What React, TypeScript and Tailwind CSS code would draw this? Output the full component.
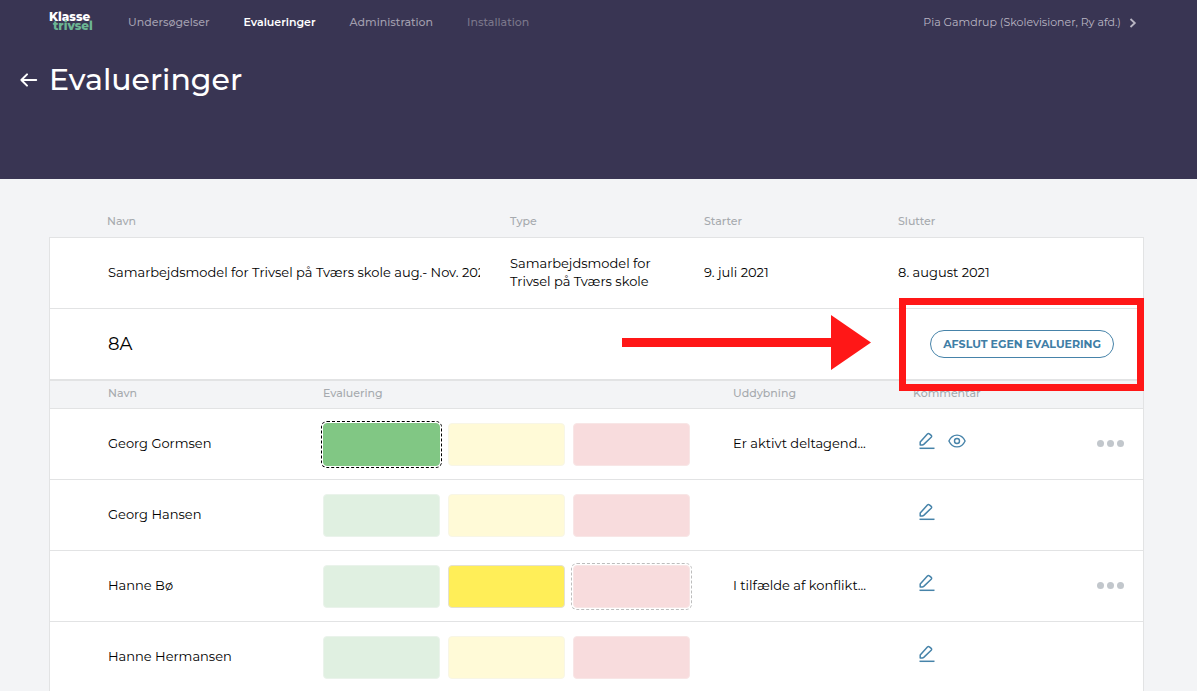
import { clsx } from 'clsx';

type Rating = 'green' | 'yellow' | 'red';

interface Student {
    name: string;
    selected?: Rating;
    outlined?: Rating;
    note?: string;
    canView?: boolean;
    hasMenu?: boolean;
}

const NAV_ITEMS = [
    { label: 'Undersøgelser', className: 'text-[#a19eae] font-medium' },
    { label: 'Evalueringer', className: 'text-white font-semibold' },
    { label: 'Administration', className: 'text-[#a19eae] font-medium' },
    { label: 'Installation', className: 'text-[#7b778b] font-medium' },
];

const STUDENTS: Student[] = [
    { name: 'Georg Gormsen', selected: 'green', outlined: 'green', note: 'Er aktivt deltagend...', canView: true, hasMenu: true },
    { name: 'Georg Hansen' },
    { name: 'Hanne Bø', selected: 'yellow', outlined: 'red', note: 'I tilfælde af konflikt...', hasMenu: true },
    { name: 'Hanne Hermansen' },
];

const RATINGS: { id: Rating; label: string; pale: string; solid: string }[] = [
    { id: 'green', label: 'Grøn', pale: 'bg-[#e0f0e1] border-[#eaf3eb]', solid: 'bg-[#81c784] border-[#81c784]' },
    { id: 'yellow', label: 'Gul', pale: 'bg-[#fffad7] border-[#f8f6e6]', solid: 'bg-[#ffee58] border-[#e4e1d0]' },
    { id: 'red', label: 'Rød', pale: 'bg-[#f8dcdd] border-[#f8e6e6]', solid: 'bg-[#e57373] border-[#e57373]' },
];

const PencilIcon = () => (
    <svg width="18" height="18" viewBox="0 0 18 18" fill="none" stroke="#4683a9" strokeWidth="1.5" strokeLinejoin="round">
        <path d="M2.2 12.9V10L9.4 2.1Q10.4 1 11.4 1.9L13.2 3.4Q14.1 4.2 13.2 5.2L6 12.1Q5.1 12.9 4.2 12.9Z" />
        <path d="M1.5 16.3H16.5" />
    </svg>
);

const EyeIcon = () => (
    <svg width="18" height="14" viewBox="0 0 18 14" fill="none" stroke="#4683a9" strokeWidth="1.4" strokeLinejoin="round">
        <path d="M.9 7C2.7 3.2 5.6 1.1 9 1.1S15.3 3.2 17.1 7C15.3 10.8 12.4 12.9 9 12.9S2.7 10.8 .9 7Z" />
        <circle cx="9" cy="7" r="2.5" />
    </svg>
);

const RatingButtons = ({ student }: { student: Student }) => (
    <div className="flex gap-2">
        {RATINGS.map((rating) => (
            <button
                key={rating.id}
                aria-label={rating.label}
                aria-pressed={student.selected === rating.id}
                className={clsx(
                    'w-[117px] h-[43px] rounded border',
                    student.selected === rating.id ? rating.solid : rating.pale,
                    student.outlined === rating.id && 'outline-1 outline-dashed outline-offset-1',
                    student.outlined === rating.id && (student.selected === rating.id ? 'outline-black' : 'outline-[#bdbdbd]')
                )}
            />
        ))}
    </div>
);

const Header = () => (
    <header className="bg-[#393553] h-[179px] pl-5 pr-[60px]">
        <div className="flex items-center h-11 pl-[29px]">
            <a href="#" className="w-[79px] pb-[3px] text-[12px] leading-[9px] font-extrabold text-white">
                <span className="block">Klasse</span>
                <span className="block pl-1 text-[#6cb593]">trivsel</span>
            </a>
            <nav className="flex gap-[34px] text-[11px]">
                {NAV_ITEMS.map((item) => (
                    <a key={item.label} href="#" className={item.className}>{item.label}</a>
                ))}
            </nav>
            <button className="ml-auto flex items-center gap-2 text-[11px] text-[#b9b6c3]">
                Pia Gamdrup (Skolevisioner, Ry afd.)
                <svg className="mt-0.5" width="8" height="10" viewBox="0 0 8 10" fill="none" stroke="currentColor" strokeWidth="1.8">
                    <path d="M1.5 1L5.8 5L1.5 9" />
                </svg>
            </button>
        </div>
        <div className="flex items-center gap-[11px] mt-4">
            <a href="#" aria-label="Tilbage">
                <svg width="18" height="14" viewBox="0 0 18 14" fill="none" stroke="#fff" strokeWidth="2" strokeLinecap="round" strokeLinejoin="round">
                    <path d="M7 1.4L1.4 7L7 12.6M1.4 7H16.2" />
                </svg>
            </a>
            <h1 className="text-[30px] leading-10 font-medium text-white">Evalueringer</h1>
        </div>
    </header>
);

const EvaluationTable = () => (
    <table className="w-full table-fixed border-separate border-spacing-0 text-left">
        <thead className="text-[11px] text-[#a6aaae]">
            <tr className="h-[58px]">
                <th className="pl-[58px] pt-[26px] font-medium">Navn</th>
                <th className="w-[194px] pt-[26px] font-medium">Type</th>
                <th className="w-[194px] pt-[26px] font-medium">Starter</th>
                <th className="w-[246px] pt-[26px] font-medium">Slutter</th>
            </tr>
        </thead>
        <tbody className="bg-white text-[13px] leading-[18px]">
            <tr className="h-[71px]">
                <td className="border-t border-l border-[#e2e3e4] pl-[58px] pr-[30px] pb-0.5">
                    <div className="overflow-hidden whitespace-nowrap">Samarbejdsmodel for Trivsel på Tværs skole aug.- Nov. 2021</div>
                </td>
                <td className="border-t border-[#e2e3e4] pr-10 pb-0.5">Samarbejdsmodel for Trivsel på Tværs skole</td>
                <td className="border-t border-[#e2e3e4] pb-0.5">9. juli 2021</td>
                <td className="border-t border-r border-[#e2e3e4] pb-0.5">8. august 2021</td>
            </tr>
        </tbody>
    </table>
);

const ClassRow = () => (
    <div className="relative flex items-center justify-between h-[71px] bg-white border-x border-t border-[#e2e3e4] pl-[58px] pr-[29px]">
        <h2 className="text-[18px]">8A</h2>
        <button className="h-7 px-3 rounded-full border border-[#4683a9] text-[11px] font-bold text-[#3f7ea6]">AFSLUT EGEN EVALUERING</button>

        {/* Guide highlight */}
        <svg className="absolute right-[272px] top-1.5 pointer-events-none" width="249" height="55" viewBox="0 0 249 55" fill="#ff1717">
            <path d="M0 23H209V0L249 27.5L209 55V32H0Z" />
        </svg>
        <div className="absolute -right-px -top-[11px] z-10 w-[245px] h-[93px] border-[7px] border-[#ff1717] pointer-events-none" />
    </div>
);

const StudentTable = () => (
    <div className="bg-white border-x border-t-2 border-[#e2e3e4]">
        <table className="w-full table-fixed border-separate border-spacing-0 text-left">
            <thead className="bg-[#f3f4f6] text-[11px] leading-[18px] text-[#a6aaae]">
                <tr className="h-[27px]">
                    <th className="w-[273px] pl-[58px] pb-1 font-medium">Navn</th>
                    <th className="w-[410px] pb-1 font-medium">Evaluering</th>
                    <th className="w-[180px] pb-1 font-medium">Uddybning</th>
                    <th className="pb-1 font-medium">Kommentar</th>
                    <th className="w-[100px]" aria-label="Handlinger"></th>
                </tr>
            </thead>
            <tbody className="text-[13px]">
                {STUDENTS.map((student) => (
                    <tr key={student.name} className="h-[71px]">
                        <td className="border-t border-[#e2e3e4] pl-[58px]">{student.name}</td>
                        <td className="border-t border-[#e2e3e4]"><RatingButtons student={student} /></td>
                        <td className="border-t border-[#e2e3e4] whitespace-nowrap">{student.note}</td>
                        <td className="border-t border-[#e2e3e4] pl-[5px] pb-1.5">
                            <div className="flex items-center gap-3">
                                <button aria-label="Rediger kommentar"><PencilIcon /></button>
                                {student.canView && <button aria-label="Vis kommentar"><EyeIcon /></button>}
                            </div>
                        </td>
                        <td className="border-t border-[#e2e3e4] pr-[19px] pb-0.5">
                            {student.hasMenu && (
                                <button aria-label="Flere valg" className="flex gap-[3px] ml-auto">
                                    <span className="size-[7px] rounded-full bg-[#c2c7cc]" />
                                    <span className="size-[7px] rounded-full bg-[#c2c7cc]" />
                                    <span className="size-[7px] rounded-full bg-[#c2c7cc]" />
                                </button>
                            )}
                        </td>
                    </tr>
                ))}
            </tbody>
        </table>
    </div>
);

export default function App() {
    return (
        <div className="min-h-screen bg-[#f3f4f6] font-[Montserrat,Inter,sans-serif] text-black">
            <Header />
            <main className="pl-[49px] pr-[53px]">
                <EvaluationTable />
                <ClassRow />
                <StudentTable />
            </main>
        </div>
    );
}
